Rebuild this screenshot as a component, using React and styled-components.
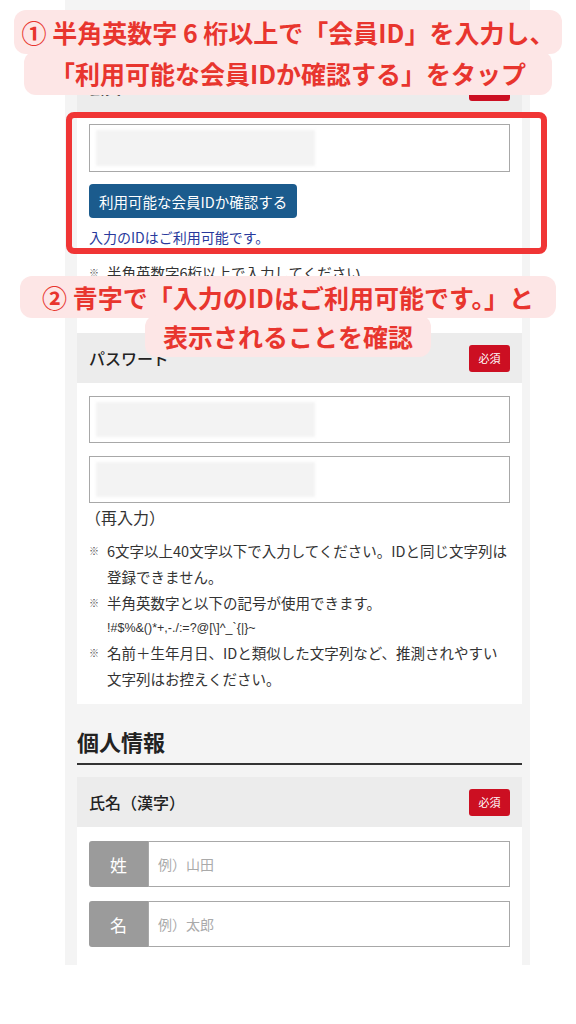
import React from 'react';
import styled, { createGlobalStyle } from 'styled-components';

const GlobalStyle = createGlobalStyle`
  html, body {
    margin: 0;
    padding: 0;
    background: #ffffff;
  }
  body {
    font-family: 'Noto Sans CJK JP', 'Noto Sans', sans-serif;
    color: #222;
  }
  * {
    box-sizing: border-box;
  }
`

const Page = styled.div`
  position: relative;
  width: 576px;
  min-height: 1024px;
  background: #fff;
`

const Panel = styled.div`
  margin-left: 65px;
  width: 465px;
  background: #f4f4f4;
  padding: 62px 8px 0 12px;
`

const Card = styled.div`
  background: #fff;
`

const FieldHeader = styled.div`
  height: 50px;
  background: #ececec;
  display: flex;
  align-items: center;
  justify-content: space-between;
  padding: 0 12px;
`

const FieldTitle = styled.div`
  font-size: 16px;
  font-weight: 500;
  color: #222;
`

const Badge = styled.span`
  display: inline-flex;
  align-items: center;
  justify-content: center;
  width: 41px;
  height: 27px;
  border-radius: 3px;
  background: #cc0f22;
  color: #fff;
  font-size: 11px;
`

const FieldBody = styled.div`
  padding: ${p => p.pad || '12px 12px 12px'};
`

const TextBox = styled.div`
  height: ${p => p.h || 48}px;
  border: 1px solid #a8a8a8;
  background: #fff;
  padding: 5px 6px;
  margin-top: ${p => p.mt || 0}px;
`

const Redacted = styled.div`
  width: 219px;
  height: 100%;
  background: #f3f3f3;
  filter: blur(1.5px);
`

const CheckButton = styled.button`
  display: block;
  margin-top: 12px;
  height: 34px;
  padding: 0 10px;
  border: none;
  border-radius: 4px;
  background: #1b5b8d;
  color: #fff;
  font-family: inherit;
  font-size: 14.5px;
`

const Available = styled.div`
  margin-top: 9px;
  line-height: 20px;
  font-size: 14px;
  color: #28399c;
`

const Reenter = styled.div`
  margin-top: 2px;
  line-height: 24px;
  font-size: 16px;
  margin-left: -4px;
  color: #333;
`

const Notes = styled.ul`
  list-style: none;
  margin: ${p => p.mt || 9}px 0 0;
  padding: 0;
`

const Note = styled.li`
  position: relative;
  padding-left: 18px;
  font-size: 14.5px;
  line-height: 26px;
  color: #333;
  &::before {
    content: '※';
    position: absolute;
    left: 0;
    top: 0;
    font-size: 10px;
    color: #555;
  }
`

const Symbols = styled.span`
  display: block;
  font-size: 12.5px;
  line-height: 24px;
  font-family: 'Liberation Sans', sans-serif;
`

const SectionTitle = styled.h2`
  margin: 21px 0 12px;
  padding-bottom: 6px;
  border-bottom: 2px solid #333;
  font-size: 22px;
  font-weight: 700;
  line-height: 32px;
  color: #222;
`

const NameRow = styled.div`
  display: flex;
  height: 46px;
  margin-top: ${p => p.mt || 0}px;
`

const NameLabel = styled.div`
  width: 59px;
  display: flex;
  align-items: center;
  justify-content: center;
  background: #9b9b9b;
  border-radius: 3px 0 0 3px;
  color: #fff;
  font-size: 17px;
`

const NameInput = styled.div`
  flex: 1;
  display: flex;
  align-items: center;
  padding-left: 9px;
  border: 1px solid #a8a8a8;
  font-size: 14px;
  color: #aaa;
`

const Highlight = styled.div`
  position: absolute;
  left: 66px;
  top: 112px;
  width: 481px;
  height: 142px;
  border: 6px solid #f03535;
  border-radius: 8px;
`

const Callout = styled.div`
  position: absolute;
  left: 0;
  right: 0;
  top: ${p => p.top}px;
  display: flex;
  flex-direction: column;
  align-items: center;
`

const CalloutLine = styled.span`
  display: block;
  padding: 1px ${p => p.px || 12}px;
  margin-top: ${p => p.first ? 0 : -3}px;
  background: #fde6e6;
  border-radius: 12px;
  color: #e8352e;
  font-size: 25px;
  font-weight: 700;
  line-height: ${p => p.lh || 40}px;
  white-space: nowrap;
`

export default function App() {
  return (
    <Page>
      <GlobalStyle />
      <Panel>
        <Card>
          <FieldHeader>
            <FieldTitle>会員ID</FieldTitle>
            <Badge>必須</Badge>
          </FieldHeader>
          <FieldBody pad="12px 12px 47px">
            <TextBox><Redacted /></TextBox>
            <CheckButton>利用可能な会員IDか確認する</CheckButton>
            <Available>入力のIDはご利用可能です。</Available>
            <Notes mt={13}>
              <Note>半角英数字6桁以上で入力してください</Note>
            </Notes>
          </FieldBody>
          <FieldHeader>
            <FieldTitle>パスワード</FieldTitle>
            <Badge>必須</Badge>
          </FieldHeader>
          <FieldBody pad="13px 12px 12px">
            <TextBox h={47}><Redacted /></TextBox>
            <TextBox h={47} mt={13}><Redacted /></TextBox>
            <Reenter>（再入力）</Reenter>
            <Notes>
              <Note>6文字以上40文字以下で入力してください。IDと同じ文字列は<br />登録できません。</Note>
              <Note>半角英数字と以下の記号が使用できます。<Symbols>{'!#$%&()*+,-./:=?@[\\]^_`{|}~'}</Symbols></Note>
              <Note>名前＋生年月日、IDと類似した文字列など、推測されやすい<br />文字列はお控えください。</Note>
            </Notes>
          </FieldBody>
        </Card>
        <SectionTitle>個人情報</SectionTitle>
        <Card>
          <FieldHeader>
            <FieldTitle>氏名（漢字）</FieldTitle>
            <Badge>必須</Badge>
          </FieldHeader>
          <FieldBody pad="14px 12px 18px">
            <NameRow>
              <NameLabel>姓</NameLabel>
              <NameInput>例）山田</NameInput>
            </NameRow>
            <NameRow mt={14}>
              <NameLabel>名</NameLabel>
              <NameInput>例）太郎</NameInput>
            </NameRow>
          </FieldBody>
        </Card>
      </Panel>
      <Highlight />
      <Callout top={10}>
        <CalloutLine first px={8} lh={42}>① 半角英数字 6 桁以上で「会員ID」を入力し、</CalloutLine>
        <CalloutLine px={26} lh={42}>「利用可能な会員IDか確認する」をタップ</CalloutLine>
      </Callout>
      <Callout top={276}>
        <CalloutLine first px={22}>② 青字で「入力のIDはご利用可能です。」と</CalloutLine>
        <CalloutLine px={18}>表示されることを確認</CalloutLine>
      </Callout>
    </Page>
  );
}
